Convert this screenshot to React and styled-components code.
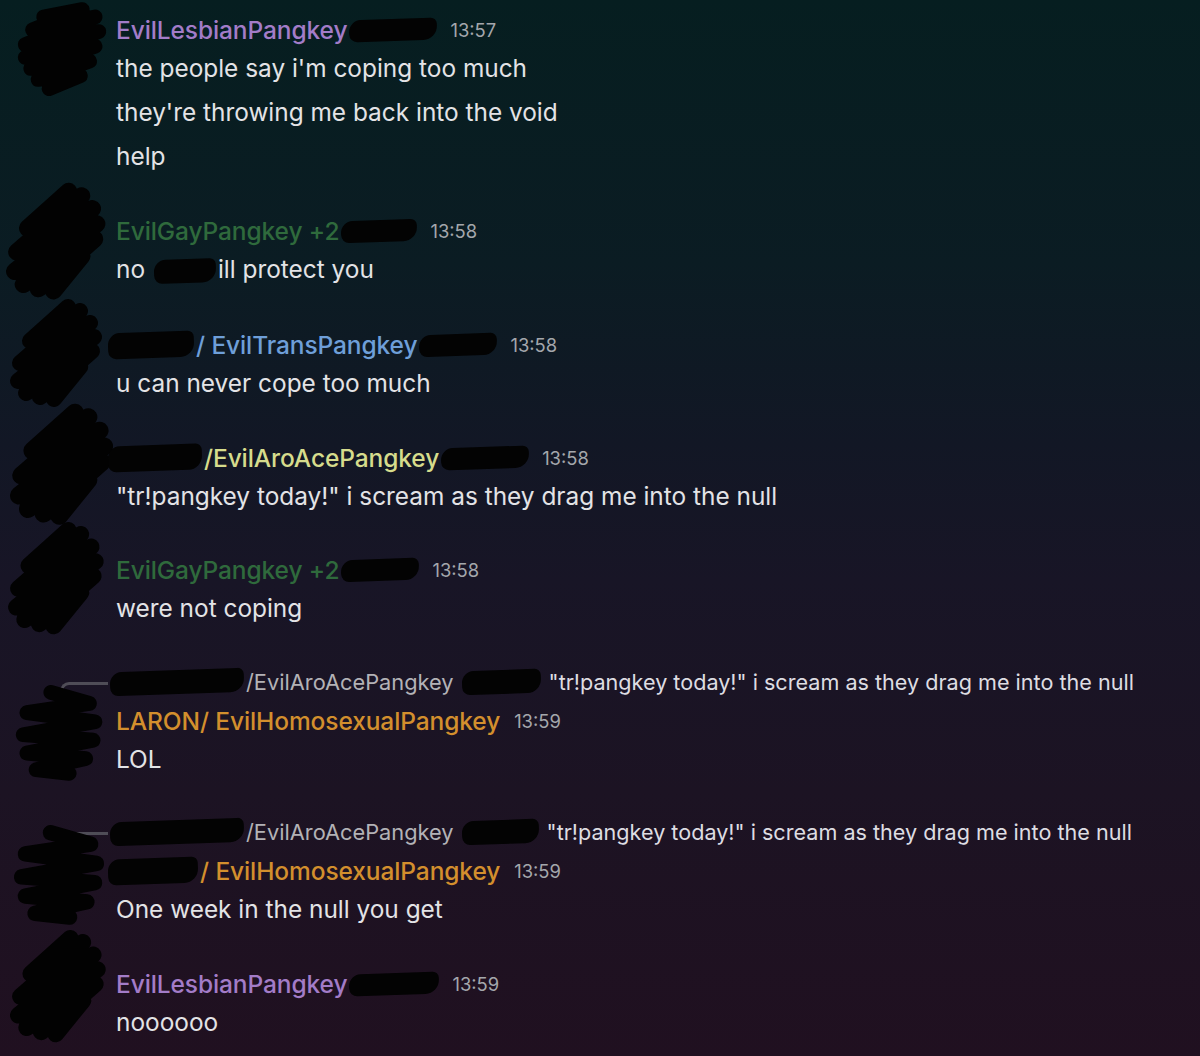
import React from "react";
import styled, { createGlobalStyle } from "styled-components";

const GlobalStyle = createGlobalStyle`
  html, body {
    margin: 0;
    padding: 0;
  }
  body {
    background: #1f1020;
    font-family: Inter, "Liberation Sans", sans-serif;
  }
`;

const messages = [
  {
    avatar: { top: -10, size: 92, left: 16, v: 0 },
    name: "EvilLesbianPangkey",
    color: "#a37cc8",
    redact: 88,
    time: "13:57",
    lines: ["the people say i'm coping too much", "they're throwing me back into the void", "help"],
  },
  {
    avatar: { top: -30, size: 108, left: 6, v: 1 },
    name: "EvilGayPangkey +2",
    color: "#2f6a3c",
    redact: 76,
    time: "13:58",
    lines: [["no ", 62, "ill protect you"]],
  },
  {
    avatar: { top: -28, size: 100, left: 10, v: 1 },
    pre: 86,
    name: "/ EvilTransPangkey",
    color: "#6e9fd9",
    redact: 78,
    time: "13:58",
    lines: ["u can never cope too much"],
  },
  {
    avatar: { top: -36, size: 112, left: 10, v: 1 },
    pre: 94,
    name: "/EvilAroAcePangkey",
    color: "#d6dc8c",
    redact: 88,
    time: "13:58",
    lines: ["\"tr!pangkey today!\" i scream as they drag me into the null"],
  },
  {
    avatar: { top: -30, size: 104, left: 8, v: 1 },
    name: "EvilGayPangkey +2",
    color: "#2f6a3c",
    redact: 78,
    time: "13:58",
    lines: ["were not coping"],
  },
  {
    reply: { pre: 134, name: "/EvilAroAcePangkey", redact: 79 },
    avatar: { top: -20, size: 92, left: 14, v: 2 },
    name: "LARON/ EvilHomosexualPangkey",
    color: "#d38f2d",
    time: "13:59",
    lines: ["LOL"],
  },
  {
    reply: { pre: 134, name: "/EvilAroAcePangkey", redact: 77 },
    avatar: { top: -30, size: 96, left: 12, v: 2 },
    pre: 90,
    name: "/ EvilHomosexualPangkey",
    color: "#d38f2d",
    time: "13:59",
    lines: ["One week in the null you get"],
  },
  {
    avatar: { top: -36, size: 104, left: 10, v: 1 },
    name: "EvilLesbianPangkey",
    color: "#a37cc8",
    redact: 90,
    time: "13:59",
    lines: ["nooooooo".slice(0, 7)],
  },
];

const scribblePaths = [
  "M30 14 L72 6 L18 28 L86 14 L10 44 L90 30 L10 58 L86 46 L16 70 L80 62 L24 82 L70 78 L36 92",
  "M58 6 L20 40 L70 10 L10 62 L80 22 L8 80 L84 36 L16 92 L82 50 L30 96 L70 66 L44 98",
  "M40 8 L82 20 L14 30 L88 40 L10 54 L86 60 L14 74 L78 80 L24 92 L60 96",
];

const Scribble = ({ size, top, left, v }) => (
  <AvatarSvg
    viewBox="0 0 100 100"
    width={size}
    height={size}
    style={{ marginTop: top, marginLeft: left }}
  >
    <path
      d={scribblePaths[v]}
      fill="none"
      stroke="#020202"
      strokeWidth="16"
      strokeLinecap="round"
      strokeLinejoin="round"
    />
  </AvatarSvg>
);

const Reply = ({ pre, name, redact }) => (
  <ReplyRow>
    <Spine />
    <Redact w={pre} h={24} />
    <ReplyName>{name}</ReplyName>
    <Redact w={redact} h={24} gap={8} />
    <ReplyText>"tr!pangkey today!" i scream as they drag me into the null</ReplyText>
  </ReplyRow>
);

const Message = ({ m }) => (
  <Group>
    {m.reply && <Reply {...m.reply} />}
    <Body>
      <AvatarCol>
        <Scribble {...m.avatar} />
      </AvatarCol>
      <Content>
        <Header>
          {m.pre ? <Redact w={m.pre} h={26} lead /> : null}
          <Name color={m.color}>{m.name}</Name>
          {m.redact ? <Redact w={m.redact} h={22} /> : null}
          <Time wide={!m.redact}>{m.time}</Time>
        </Header>
        {m.lines.map((line, i) => (
          <Line key={i}>
            {Array.isArray(line) ? (
              <>
                {line[0]}
                <Redact w={line[1]} h={24} inline />
                {line[2]}
              </>
            ) : (
              line
            )}
          </Line>
        ))}
      </Content>
    </Body>
  </Group>
);

export default function App() {
  return (
    <>
      <GlobalStyle />
      <Page>
        {messages.map((m, i) => (
          <Message key={i} m={m} />
        ))}
      </Page>
    </>
  );
}

const Page = styled.div`
  width: 1200px;
  height: 1056px;
  overflow: hidden;
  box-sizing: border-box;
  padding-top: 14px;
  display: flex;
  flex-direction: column;
  gap: 36.5px;
  background: linear-gradient(
    180deg,
    #061e20 0%,
    #0b1c23 25%,
    #121725 42%,
    #181526 55%,
    #1c1323 75%,
    #201020 100%
  );
`;

const Group = styled.div`
  display: flex;
  flex-direction: column;
`;

const Body = styled.div`
  display: flex;
`;

const AvatarCol = styled.div`
  width: 116px;
  flex-shrink: 0;
`;

const AvatarSvg = styled.svg`
  display: block;
  overflow: visible;
`;

const Content = styled.div`
  display: flex;
  flex-direction: column;
`;

const Header = styled.div`
  height: 32px;
  display: flex;
  align-items: center;
  white-space: nowrap;
`;

const Name = styled.span`
  color: ${(p) => p.color};
  font-size: 24.5px;
  font-weight: 500;
  letter-spacing: -0.1px;
`;

const Time = styled.span`
  color: #a4a7ac;
  font-size: 18.4px;
  margin-left: ${(p) => (p.wide ? 14 : 11)}px;
`;

const Line = styled.div`
  color: #e3e3e6;
  font-size: 24.4px;
  line-height: 44px;
  white-space: nowrap;
`;

const Redact = styled.span`
  display: inline-block;
  width: ${(p) => p.w}px;
  height: ${(p) => p.h}px;
  background: #030303;
  border-radius: 12px 6px 14px 8px;
  transform: rotate(-2deg);
  vertical-align: ${(p) => (p.inline ? "-5px" : "middle")};
  margin: 0 ${(p) => p.gap ?? 2}px 0 ${(p) => (p.lead ? -8 : p.gap ?? 2)}px;
  flex-shrink: 0;
`;

const ReplyRow = styled.div`
  height: 30px;
  margin-bottom: 8px;
  display: flex;
  align-items: center;
  white-space: nowrap;
  padding-left: 60px;
`;

const Spine = styled.div`
  width: 48px;
  height: 24px;
  align-self: flex-start;
  margin-top: 15px;
  margin-bottom: -9px;
  box-sizing: border-box;
  border-left: 3px solid #4f4d57;
  border-top: 3px solid #4f4d57;
  border-top-left-radius: 9px;
`;

const ReplyName = styled.span`
  color: #b3b2b6;
  font-size: 21.8px;
`;

const ReplyText = styled.span`
  color: #dedde2;
  font-size: 21.6px;
`;
